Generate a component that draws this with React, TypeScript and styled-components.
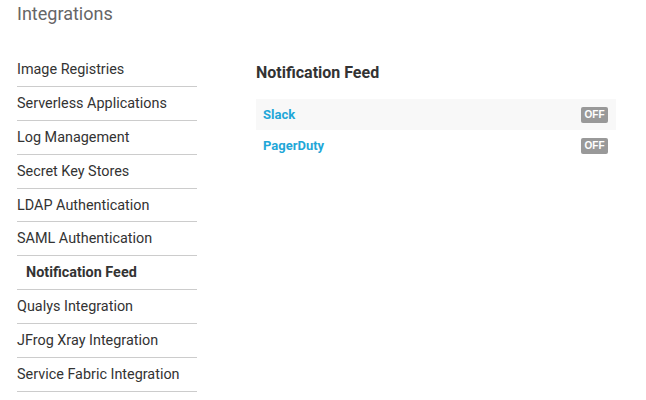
import React from 'react';
import styled, {createGlobalStyle} from 'styled-components';

const GlobalStyle = createGlobalStyle`
  body {
    margin: 0;
    background: #fff;
    font-family: Roboto, "Liberation Sans", sans-serif;
    color: #333;
  }
`;

const Page = styled.div`
  width: 646px;
  height: 400px;
  overflow: hidden;
  padding: 0 0 0 17px;
  box-sizing: border-box;
`;

const Title = styled.h1`
  margin: 0;
  padding-top: 3px;
  font-size: 18px;
  font-weight: 400;
  color: #666;
  line-height: 22px;
`;

const Body = styled.div`
  display: flex;
  gap: 59px;
  margin-top: 28px;
`;

const Sidebar = styled.ul`
  list-style: none;
  margin: 0;
  padding: 0;
  width: 180px;
`;

const NavItem = styled.li<{active?: boolean}>`
  box-sizing: border-box;
  height: 33.9px;
  display: flex;
  align-items: center;
  border-bottom: 1px solid #ccc;
  font-size: 14.4px;
  color: #333;
  font-weight: ${p => (p.active ? 700 : 400)};
  padding-left: ${p => (p.active ? '9px' : '0')};
`;

const Content = styled.div`
  width: 360px;
  padding-top: 10px;
`;

const Heading = styled.h2`
  margin: 0 0 16px;
  font-size: 16px;
  font-weight: 700;
  color: #333;
  line-height: 20px;
`;

const Row = styled.div<{shaded?: boolean}>`
  height: 31px;
  display: flex;
  align-items: center;
  justify-content: space-between;
  padding: 0 8px 0 7px;
  background: ${p => (p.shaded ? '#f8f8f8' : 'transparent')};
`;

const Link = styled.a`
  color: #1fa7d8;
  font-size: 13px;
  font-weight: 700;
  text-decoration: none;
`;

const Badge = styled.span`
  background: #999;
  color: #fff;
  font-size: 10px;
  font-weight: 700;
  border-radius: 2px;
  width: 27px;
  height: 16px;
  display: flex;
  align-items: center;
  justify-content: center;
  font-family: "Liberation Sans", Arial, sans-serif;
`;

const navItems = [
  'Image Registries',
  'Serverless Applications',
  'Log Management',
  'Secret Key Stores',
  'LDAP Authentication',
  'SAML Authentication',
  'Notification Feed',
  'Qualys Integration',
  'JFrog Xray Integration',
  'Service Fabric Integration',
];

const feeds = ['Slack', 'PagerDuty'];

export default function App() {
  return (
    <Page>
      <GlobalStyle />
      <Title>Integrations</Title>
      <Body>
        <Sidebar>
          {navItems.map(item => (
            <NavItem key={item} active={item === 'Notification Feed'}>
              {item}
            </NavItem>
          ))}
        </Sidebar>
        <Content>
          <Heading>Notification Feed</Heading>
          {feeds.map((feed, i) => (
            <Row key={feed} shaded={i % 2 === 0}>
              <Link href="#">{feed}</Link>
              <Badge>OFF</Badge>
            </Row>
          ))}
        </Content>
      </Body>
    </Page>
  );
}
